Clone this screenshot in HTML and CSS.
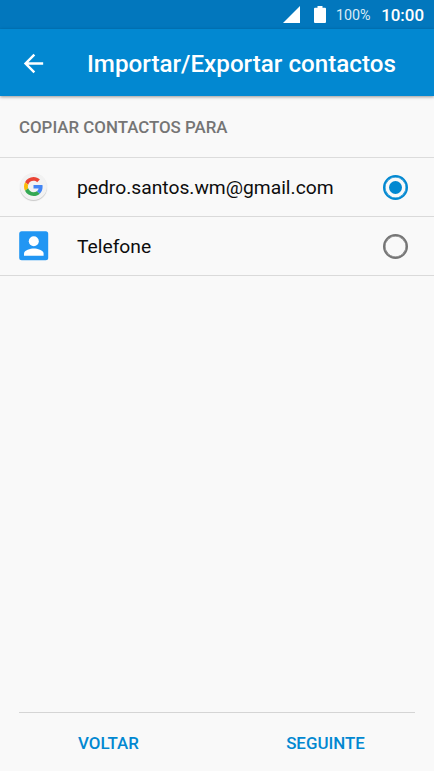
FILE: index.html
```html
<!DOCTYPE html>
<html lang="pt">
<head>
<meta charset="utf-8">
<title>Importar/Exportar contactos</title>
<link rel="stylesheet" href="styles.css">
</head>
<body>
<div class="screen">
  <div class="status-bar">
    <svg class="signal" width="17" height="17" viewBox="0 0 17 17"><path d="M0 17L17 0V17Z"/></svg>
    <svg class="battery" width="12" height="17" viewBox="0 0 12 17"><path d="M3.5 0h5v1.7H11a1 1 0 0 1 1 1V16a1 1 0 0 1-1 1H1a1 1 0 0 1-1-1V2.700a1 1 0 0 1 1-1h2.500z"/></svg>
    <span class="percent">100%</span>
    <span class="clock">10:00</span>
  </div>
  <header class="app-bar">
    <svg class="back" width="29" height="29" viewBox="0 0 24 24"><path d="M20 11H7.830l5.590-5.590L12 4l-8 8 8 8 1.410-1.410L7.830 13H20v-2z"/></svg>
    <h1 class="title">Importar/Exportar contactos</h1>
  </header>
  <main class="content">
    <h2 class="section">COPIAR CONTACTOS PARA</h2>
    <label class="row">
      <span class="google">
        <svg width="19" height="19" viewBox="0 0 48 48">
          <path fill="#ea4335" d="M24 9.500c3.540 0 6.710 1.220 9.210 3.600l6.850-6.850C35.900 2.380 30.470 0 24 0 14.620 0 6.510 5.380 2.560 13.220l7.980 6.190C12.430 13.720 17.740 9.500 24 9.500z"/>
          <path fill="#4285f4" d="M46.980 24.550c0-1.570-.15-3.090-.38-4.550H24v9.020h12.940c-.58 2.960-2.260 5.480-4.780 7.180l7.730 6c4.510-4.180 7.090-10.360 7.090-17.650z"/>
          <path fill="#fbbc05" d="M10.530 28.590c-.48-1.450-.76-2.990-.76-4.590s.27-3.140.76-4.590l-7.980-6.190C.92 16.460 0 20.120 0 24c0 3.880.92 7.540 2.560 10.780l7.970-6.190z"/>
          <path fill="#34a853" d="M24 48c6.480 0 11.930-2.130 15.890-5.810l-7.730-6c-2.150 1.450-4.920 2.300-8.160 2.300-6.260 0-11.570-4.220-13.470-9.910l-7.980 6.190C6.510 42.620 14.620 48 24 48z"/>
        </svg>
      </span>
      <span class="name">pedro.santos.wm@gmail.com</span>
      <span class="radio checked"></span>
    </label>
    <label class="row">
      <svg class="phone" width="30" height="30" viewBox="0 0 30 30">
        <rect x=".2" y=".2" width="29" height="29" rx="2.500" fill="#2196f3"/>
        <circle cx="14.800" cy="10.200" r="5" fill="#fff"/>
        <path d="M5 24.800v-2.300c0-3.400 6.500-5 9.800-5s9.800 1.600 9.800 5v2.300z" fill="#fff"/>
      </svg>
      <span class="name">Telefone</span>
      <span class="radio"></span>
    </label>
  </main>
  <footer class="footer">
    <div class="divider"></div>
    <div class="actions">
      <span class="action">VOLTAR</span>
      <span class="action">SEGUINTE</span>
    </div>
  </footer>
</div>
</body>
</html>
```

FILE: styles.css
```css
* { box-sizing: border-box; }
body { margin: 0; font-family: Roboto, sans-serif; }
.screen {
  width: 434px;
  height: 771px;
  display: flex;
  flex-direction: column;
  background: #f9f9f9;
  overflow: hidden;
}
.status-bar {
  flex: none;
  height: 29px;
  display: flex;
  align-items: center;
  padding: 0 10px 0 283px;
  background: #0277bd;
  color: #fff;
  fill: #fff;
  white-space: nowrap;
}
.signal { flex: none; margin-right: 14px; }
.battery { flex: none; margin: 0 10px 0 0; }
.percent { padding-top: 1px; font-size: 14.300px; color: #d9ebf5; }
.clock { margin-left: auto; font-size: 16.900px; font-weight: 500; }
.app-bar {
  flex: none;
  position: relative;
  height: 67px;
  display: flex;
  align-items: center;
  padding: 0 0 0 19px;
  background: #0288d1;
  color: #fff;
  box-shadow: 0 1px 3px rgba(0, 0, 0, .4);
}
.back { fill: #fff; margin: 1px 39px 0 0; }
.title {
  margin: 2px 0 0;
  font-size: 24.200px;
  font-weight: 500;
  white-space: nowrap;
}
.content { flex: 1; }
.section {
  height: 61.500px;
  margin: 0;
  padding: 1px 19px 0;
  display: flex;
  align-items: center;
  border-bottom: 1.500px solid #dcdcdc;
  color: #757575;
  font-size: 16.880px;
  font-weight: 500;
}
.row {
  height: 59px;
  display: flex;
  align-items: center;
  padding: 1px 26px 0 19px;
  border-bottom: 1px solid #dadada;
}
.google {
  width: 27px;
  height: 27px;
  margin: 0 30px 1px 1px;
  display: flex;
  align-items: center;
  justify-content: center;
  border-radius: 50%;
  background: #f2f2f2;
  box-shadow: 0 1px 1px rgba(0, 0, 0, .2);
}
.phone { margin: 0 28px 1px 0; }
.name { font-size: 19.250px; color: #0d0d0d; }
.radio {
  width: 25px;
  height: 25px;
  margin: 1px 0 0 auto;
  display: flex;
  align-items: center;
  justify-content: center;
  border: 2.500px solid #757575;
  border-radius: 50%;
  box-shadow: inset 0 0 0 .5px #757575;
}
.checked { border-color: #0288d1; box-shadow: inset 0 0 0 .5px #0288d1; }
.checked::after {
  content: "";
  width: 13px;
  height: 13px;
  border-radius: 50%;
  background: #0288d1;
}
.footer { flex: none; height: 59px; }
.divider { height: 1px; margin: 0 19px; background: #d5d5d5; }
.actions { height: 58px; display: flex; }
.action {
  width: 50%;
  padding-top: 1px;
  display: flex;
  align-items: center;
  justify-content: center;
  color: #0288d1;
  font-size: 16.900px;
  font-weight: 500;
}
```
